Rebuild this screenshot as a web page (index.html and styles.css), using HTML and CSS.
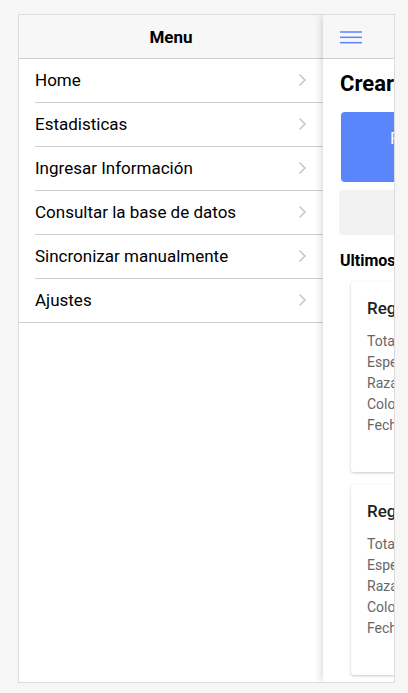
FILE: index.html
```html
<!DOCTYPE html>
<html lang="es">
<head>
<meta charset="utf-8">
<title>Menu</title>
<link rel="stylesheet" href="styles.css">
</head>
<body>
<div class="frame">
  <aside class="menu">
    <header class="menu-header">Menu</header>
    <ul class="menu-list">
      <li class="menu-item"><span>Home</span><svg class="chev" width="9" height="14" viewBox="0 0 9 14"><polyline points="1.5,1.5 7,7 1.5,12.5" fill="none" stroke="#c7c7cc" stroke-width="1.6"/></svg></li>
      <li class="menu-item"><span>Estadisticas</span><svg class="chev" width="9" height="14" viewBox="0 0 9 14"><polyline points="1.5,1.5 7,7 1.5,12.5" fill="none" stroke="#c7c7cc" stroke-width="1.6"/></svg></li>
      <li class="menu-item"><span>Ingresar Información</span><svg class="chev" width="9" height="14" viewBox="0 0 9 14"><polyline points="1.5,1.5 7,7 1.5,12.5" fill="none" stroke="#c7c7cc" stroke-width="1.6"/></svg></li>
      <li class="menu-item"><span>Consultar la base de datos</span><svg class="chev" width="9" height="14" viewBox="0 0 9 14"><polyline points="1.5,1.5 7,7 1.5,12.5" fill="none" stroke="#c7c7cc" stroke-width="1.6"/></svg></li>
      <li class="menu-item"><span>Sincronizar manualmente</span><svg class="chev" width="9" height="14" viewBox="0 0 9 14"><polyline points="1.5,1.5 7,7 1.5,12.5" fill="none" stroke="#c7c7cc" stroke-width="1.6"/></svg></li>
      <li class="menu-item"><span>Ajustes</span><svg class="chev" width="9" height="14" viewBox="0 0 9 14"><polyline points="1.5,1.5 7,7 1.5,12.5" fill="none" stroke="#c7c7cc" stroke-width="1.6"/></svg></li>
    </ul>
  </aside>
  <main class="page">
    <header class="page-header">
      <svg class="burger" width="22" height="13" viewBox="0 0 22 13"><g stroke="#5a86fc" stroke-width="1.5"><line x1="0" y1="1" x2="22" y2="1"/><line x1="0" y1="6.3" x2="22" y2="6.3"/><line x1="0" y1="11.7" x2="22" y2="11.7"/></g></svg>
    </header>
    <div class="page-body">
      <h1 class="title">Crear registro</h1>
      <div class="btn-primary" role="button">Registrar nueva mascota</div>
      <div class="btn-secondary" role="button">Ver registros</div>
      <h2 class="subtitle">Ultimos registros</h2>
      <div class="card">
        <h3 class="card-title">Registro #12</h3>
        <p class="card-line">Total de animales: 3</p>
        <p class="card-line">Especie: Canino</p>
        <p class="card-line">Raza: Labrador</p>
        <p class="card-line">Color: Café</p>
        <p class="card-line">Fecha: 12/05/2019</p>
      </div>
      <div class="card">
        <h3 class="card-title">Registro #11</h3>
        <p class="card-line">Total de animales: 1</p>
        <p class="card-line">Especie: Felino</p>
        <p class="card-line">Raza: Siamés</p>
        <p class="card-line">Color: Blanco</p>
        <p class="card-line">Fecha: 10/05/2019</p>
      </div>
    </div>
  </main>
</div>
</body>
</html>
```

FILE: styles.css
```css
* { box-sizing: border-box; }

html, body {
  margin: 0;
  background: #f6f6f6;
}

body {
  padding: 14px 0 0 18px;
  font-family: Roboto, "Liberation Sans", Arial, sans-serif;
  color: #000;
}

.frame {
  width: 377px;
  height: 669px;
  border: 1px solid #dcdcdc;
  background: #fff;
  display: flex;
  overflow: hidden;
}

.menu {
  flex: 0 0 304px;
  width: 304px;
  background: #fff;
}

.menu-header {
  height: 44px;
  background: #f7f7f7;
  border-bottom: 1px solid #cfcfcf;
  display: flex;
  align-items: center;
  justify-content: center;
  font-size: 17px;
  font-weight: 700;
}

.menu-list {
  list-style: none;
  margin: 0;
  padding: 0;
  border-bottom: 1px solid #cfcfcf;
}

.menu-item {
  height: 44px;
  margin-left: 16px;
  padding-right: 16px;
  padding-bottom: 1px;
  display: flex;
  align-items: center;
  justify-content: space-between;
  font-size: 17px;
  border-bottom: 1px solid #cfcfcf;
}

.menu-item:last-child {
  border-bottom: none;
  height: 43px;
}

.chev {
  display: block;
  flex: none;
}

.page {
  flex: 0 0 375px;
  width: 375px;
  background: #fff;
  box-shadow: -2px 0 7px rgba(0, 0, 0, 0.14);
  position: relative;
}

.page-header {
  height: 44px;
  background: #f7f7f7;
  border-bottom: 1px solid #cfcfcf;
  display: flex;
  align-items: center;
  padding-left: 17px;
}

.burger { display: block; margin-top: 1px; }

.page-body {
  padding: 11px 17px 0 17px;
}

.title {
  margin: 0;
  font-size: 22px;
  line-height: 28px;
  font-weight: 700;
}

.btn-primary {
  margin: 14px 0 0 1px;
  height: 70px;
  border-radius: 4px;
  background: #5a86fc;
  color: #fff;
  font-size: 17px;
  line-height: 20px;
  padding: 16px 0 0 49px;
  white-space: nowrap;
}

.btn-secondary {
  margin: 8px 0 0 -1px;
  height: 45px;
  border-radius: 4px;
  background: #f2f2f2;
  color: #333;
  font-size: 17px;
  line-height: 45px;
  padding: 0 0 0 60px;
  white-space: nowrap;
}

.subtitle {
  margin: 16px 0 0 0;
  font-size: 16px;
  line-height: 20px;
  font-weight: 700;
}

.card {
  margin: 11px 0 13px 11px;
  padding: 16px 16px 36px 16px;
  background: #fff;
  border-radius: 3px;
  box-shadow: 0 1px 3px rgba(0, 0, 0, 0.22);
}

.card-title {
  margin: 0 0 13px 0;
  font-size: 17px;
  line-height: 20px;
  font-weight: 500;
  color: #222;
}

.card-line {
  margin: 0;
  font-size: 14px;
  line-height: 21px;
  color: #666;
}
```
